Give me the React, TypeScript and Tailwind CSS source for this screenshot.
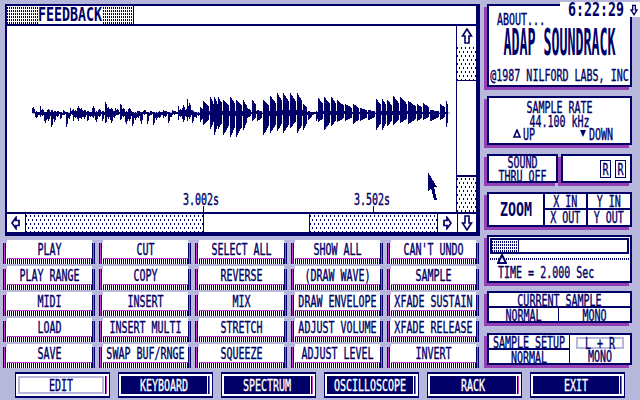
import type { ReactNode } from 'react';

const NAVY = '#000068';

// 1x2 dots, staggered, as in the scrollbar thumbs
const dots = 'bg-[conic-gradient(from_270deg_at_1px_2px,#000068_25%,transparent_0),conic-gradient(from_270deg_at_1px_2px,#000068_25%,transparent_0)] bg-[length:4px_8px] bg-[position:0_1px,2px_5px]';
// rows of fine dots, title bar and time slider
const rows = 'bg-[conic-gradient(from_270deg_at_1px_2px,#000068_25%,transparent_0)] bg-[length:2px_3px] bg-[position:0_1px]';
const stripes = 'bg-[repeating-linear-gradient(90deg,#000068_0_1px,#ffffff_1px_2px)]';

// [x, up, down] peaks, page coordinates, read off the screenshot
const peaks: number[][] = [
  [32, 8, 0], [35, 2, 6], [40, 7, 4], [44, 1, 13], [47, 5, 10], [51, 3, 14], [57, 2, 4], [60, 1, 6], [63, 3, 2], [66, 1, 14],
  [70, 5, 3], [73, 4, 8], [77, 9, 10], [80, 6, 8], [83, 4, 7], [87, 2, 8], [92, 9, 6], [95, 2, 12], [98, 5, 5], [102, 2, 8],
  [105, 11, 10], [110, 6, 12], [115, 5, 3], [120, 9, 7], [125, 2, 15], [128, 6, 10], [132, 1, 13], [137, 3, 6], [140, 1, 14], [143, 4, 2],
  [147, 1, 11], [150, 2, 2], [153, 1, 12], [158, 2, 6], [163, 3, 5], [168, 1, 10], [172, 3, 2], [178, 7, 7], [182, 9, 10], [187, 14, 8],
  [192, 3, 10], [196, 1, 5], [200, 6, 9], [203, 12, 12], [210, 16, 16], [214, 16, 22], [218, 16, 16], [223, 13, 22], [230, 16, 24], [236, 13, 24],
  [243, 13, 17], [247, 5, 5], [252, 13, 8], [257, 3, 8], [263, 13, 22], [270, 17, 20], [277, 20, 18], [283, 20, 20], [290, 20, 15], [297, 20, 20],
  [303, 9, 17], [308, 2, 7], [312, 1, 2], [316, 2, 8], [318, 15, 9], [324, 16, 17], [331, 16, 13], [337, 13, 9], [345, 9, 8], [353, 9, 11],
  [360, 5, 8], [368, 3, 7], [376, 14, 17], [382, 14, 17], [387, 13, 13], [393, 17, 12], [400, 16, 10], [408, 12, 11], [417, 9, 8], [423, 10, 7],
  [430, 3, 8], [440, 9, 7], [446, 12, 14],
];

function waveColumns() {
  const cols: { x: number; up: number; down: number }[] = [];
  for (let i = 0; i < peaks.length; i++) {
    const [x, up, down] = peaks[i];
    const next = i + 1 < peaks.length ? peaks[i + 1][0] : x + 2;
    for (let px = x; px < next; px++) {
      const t = (px - x) / (next - x);
      const loud = px >= 200;
      const fade = 1 - t * (loud ? 0.55 : 0.75);
      // quiet part is a thin trace, loud bursts are solid with a gap between them
      const wobble = loud ? (px === next - 1 && next - x >= 5 ? 0.25 : 1) : px % 3 === 2 ? 0.6 : 1;
      cols.push({ x: px, up: Math.round(up * fade * wobble), down: Math.round(down * fade * wobble) });
    }
  }
  return cols;
}

function T({ children, className = '' }: { children: ReactNode; className?: string }) {
  return (
    <span className={`inline-block translate-y-px scale-y-[1.5] whitespace-pre font-['DejaVu_Sans_Mono',monospace] text-[10px] leading-[8px] text-[#000068] [-webkit-text-stroke:0.25px_currentColor] ${className}`}>
      {children}
    </span>
  );
}

function Big({ children, className = '' }: { children: ReactNode; className?: string }) {
  return (
    <span className={`inline-block whitespace-pre font-['DejaVu_Sans_Mono',monospace] text-[13.3px] font-bold leading-[10px] text-[#000068] ${className}`}>
      {children}
    </span>
  );
}

function ArrowV({ down = false }: { down?: boolean }) {
  return (
    <svg width="12" height="16" viewBox="0 0 12 16" className={down ? 'rotate-180' : ''}>
      <path d="M6 1 L10.5 8 H8 V15 H4 V8 H1.5 Z" fill="none" stroke={NAVY} strokeWidth="1.6" />
    </svg>
  );
}

function ArrowH({ right = false }: { right?: boolean }) {
  return (
    <svg width="9" height="14" viewBox="0 0 9 14" className={right ? 'rotate-180' : ''}>
      <path d="M1 7 L5 1.5 V4.5 H8 V9.5 H5 V12.5 Z" fill="none" stroke={NAVY} strokeWidth="1.7" />
    </svg>
  );
}

function Panel({ children, className = '' }: { children: ReactNode; className?: string }) {
  return (
    <div className={`border-2 border-[#000068] bg-white shadow-[-3px_3px_0_#9440b4] ${className}`}>{children}</div>
  );
}

function Cmd({ label }: { label: string }) {
  return (
    <div className="flex h-[24px] w-[92px]">
      <div className="mt-[3px] flex w-[4px]">
        <div className="w-px bg-[#000068]" />
        <div className="w-px bg-[#c040d0]" />
        <div className="w-px bg-[#000068]" />
        <div className="w-px bg-white" />
      </div>
      <div className="flex flex-1 flex-col">
        <div className="flex h-[18px] items-center justify-center bg-white">
          <T>{label}</T>
        </div>
        <div className="h-px bg-[#c040d0]" />
        <div className={`h-[5px] ${stripes}`} />
      </div>
      <div className="mt-[3px] flex w-[3px]">
        <div className="w-px bg-[#000068]" />
        <div className="w-px bg-[#c040d0]" />
        <div className="w-px bg-[#000068]" />
      </div>
    </div>
  );
}

function NavBtn({ label, active = false }: { label: string; active?: boolean }) {
  return (
    <div className="flex h-[26px] w-[95px] border-y-2 border-x border-[#000068] bg-white p-[2px]">
      <div className={`flex flex-1 items-center justify-center border-2 ${active ? 'border-[#b8b8dc] bg-white' : 'border-[#000068] bg-[#000068]'}`}>
        <T className={active ? '' : 'text-white'}>{label}</T>
      </div>
      <div className="ml-px w-px bg-[#000068]" />
      <div className="w-px bg-[#c040d0]" />
    </div>
  );
}

const commands = [
  ['PLAY', 'CUT', 'SELECT ALL', 'SHOW ALL', "CAN'T UNDO"],
  ['PLAY RANGE', 'COPY', 'REVERSE', '(DRAW WAVE)', 'SAMPLE'],
  ['MIDI', 'INSERT', 'MIX', 'DRAW ENVELOPE', 'XFADE SUSTAIN'],
  ['LOAD', 'INSERT MULTI', 'STRETCH', 'ADJUST VOLUME', 'XFADE RELEASE'],
  ['SAVE', 'SWAP BUF/RNGE', 'SQUEEZE', 'ADJUST LEVEL', 'INVERT'],
];

const navItems = ['EDIT', 'KEYBOARD', 'SPECTRUM', 'OSCILLOSCOPE', 'RACK', 'EXIT'];

export default function App() {
  const cols = waveColumns();

  return (
    <div className="relative flex h-[400px] w-[640px] overflow-hidden bg-[#b8b8dc] text-[0px] leading-[0px]">
      {/* clock sits on top of the about panel */}
      <div className="absolute right-0 top-[2px] z-10 flex h-[15px] w-[80px] items-center bg-white pl-[8px]">
        <Big className="scale-y-[1.4]">6:22:29</Big>
        <svg width="8" height="12" viewBox="0 0 12 16" className="ml-[6px] rotate-180">
          <path d="M6 1 L10.5 8 H8 V15 H4 V8 H1.5 Z" fill="none" stroke={NAVY} strokeWidth="2" />
        </svg>
      </div>

      {/* left side */}
      <div className="flex w-[484px] flex-col">
        <div className="ml-[5px] mt-[4px] flex h-[232px] w-[475px] flex-col border-b-4 border-l-2 border-r-4 border-t-2 border-[#000068] bg-white">
          <div className="flex h-[20px] shrink-0 border-b-2 border-[#000068]">
            <div className={`flex h-full w-[127px] justify-center border-r border-[#000068] ${rows}`}>
              <div className="flex items-center bg-white">
                <Big className="scale-y-[1.5]">FEEDBACK</Big>
              </div>
            </div>
          </div>

          <div className="flex h-[186px] shrink-0">
            <div className="relative flex-1">
              <svg width="449" height="186" viewBox="7 26 449 186" className="absolute left-0 top-0" shapeRendering="crispEdges">
                <rect x="32" y="112" width="418" height="2" fill="#b8b8dc" />
                {cols.map((c) => (
                  <rect key={c.x} x={c.x} y={113 - c.up} width="1" height={Math.max(c.up + c.down, 1)} fill={NAVY} />
                ))}
                <rect x="203" y="206" width="1" height="6" fill={NAVY} />
                <rect x="373" y="206" width="1" height="6" fill={NAVY} />
                <polygon points="428,172 437,187 434,187 437,200 434,200 431,188 428,191" fill={NAVY} />
              </svg>
              <T className="absolute left-[176px] top-[169px]">3.002s</T>
              <T className="absolute left-[347px] top-[169px]">3.502s</T>
            </div>
            <div className="flex w-[20px] flex-col border-l border-[#000068]">
              <div className="flex h-[20px] items-center justify-center">
                <ArrowV />
              </div>
              <div className={`h-[35px] border-b border-[#000068] ${dots}`} />
              <div className="flex-1" />
              <div className={`h-[37px] border-t-2 border-[#000068] ${dots}`} />
            </div>
          </div>

          <div className="flex h-[20px] shrink-0 border-t-2 border-[#000068]">
            <div className="flex w-[19px] items-center justify-center border-r border-[#000068] pr-[2px]">
              <ArrowH />
            </div>
            <div className={`w-[178px] border-r border-[#000068] ${dots}`} />
            <div className="w-[105px]" />
            <div className={`w-[128px] border-l border-[#000068] ${dots}`} />
            <div className="flex w-[20px] items-center justify-center border-l border-[#000068]">
              <ArrowH right />
            </div>
            <div className="flex flex-1 items-center justify-center border-l border-[#000068]">
              <ArrowV down />
            </div>
          </div>
        </div>

        <div className="ml-[3px] mt-[4px] flex flex-col gap-[2px]">
          {commands.map((row, i) => (
            <div key={i} className="flex gap-[4px]">
              {row.map((label) => (
                <Cmd key={label} label={label} />
              ))}
            </div>
          ))}
        </div>

        <div className="ml-[15px] mt-[4px] flex w-[620px] gap-[8px]">
          {navItems.map((item) => (
            <NavBtn key={item} label={item} active={item === 'EDIT'} />
          ))}
        </div>
      </div>

      {/* right side */}
      <div className="ml-[3px] mt-[4px] flex w-[145px] flex-col">
        <Panel className="flex h-[83px] flex-col">
          <div className="ml-[8px] mt-[9px]"><T>ABOUT...</T></div>
          <div className="mt-[16px] text-center"><Big className="scale-y-[2.8]">ADAP SOUNDRACK</Big></div>
          <div className="mt-[22px] text-center"><T>@1987 NILFORD LABS, INC</T></div>
        </Panel>

        <Panel className="mt-[9px] flex h-[49px] flex-col items-center">
          <div className="mt-[5px]"><T>SAMPLE RATE</T></div>
          <div className="mt-[6px]"><T>44.100 kHz</T></div>
          <div className="mt-[4px] flex w-full pl-[24px]">
            <div className="flex w-[66px] items-center gap-[2px]">
              <svg width="8" height="9" viewBox="0 0 8 9"><path d="M4 1 L7 8 H1 Z" fill="none" stroke={NAVY} strokeWidth="1.6" /></svg>
              <T>UP</T>
            </div>
            <div className="flex items-center gap-[2px]">
              <svg width="8" height="9" viewBox="0 0 8 9"><path d="M1 1 H7 L4 8 Z" fill={NAVY} /></svg>
              <T>DOWN</T>
            </div>
          </div>
        </Panel>

        <div className="mt-[9px] flex gap-[3px]">
          <Panel className="flex h-[29px] w-[71px] flex-col items-center justify-center gap-[6px]">
            <T>SOUND</T>
            <T>THRU OFF</T>
          </Panel>
          <Panel className="flex h-[29px] w-[71px] items-center justify-end gap-[4px] pr-[4px]">
            <div className="flex h-[18px] w-[11px] items-center justify-center border border-[#000068]"><T>R</T></div>
            <div className="flex h-[18px] w-[11px] items-center justify-center border border-[#000068]"><T>R</T></div>
          </Panel>
        </div>

        <Panel className="mt-[9px] flex h-[35px]">
          <div className="flex w-[56px] items-center justify-center border-r-2 border-[#000068]">
            <Big className="scale-y-[1.5]">ZOOM</Big>
          </div>
          <div className="grid flex-1 grid-cols-2 grid-rows-2">
            <div className="flex items-center justify-center border-b-2 border-r-2 border-[#000068]"><T>X IN</T></div>
            <div className="flex items-center justify-center border-b-2 border-[#000068]"><T>Y IN</T></div>
            <div className="flex items-center justify-center border-r-2 border-[#000068]"><T>X OUT</T></div>
            <div className="flex items-center justify-center"><T>Y OUT</T></div>
          </div>
        </Panel>

        <Panel className="mt-[8px] flex h-[48px] flex-col px-[1px] pt-[1px]">
          <div className="flex h-[16px] border-2 border-[#000068]">
            <div className={`w-[27px] border-r border-[#000068] ${rows}`} />
          </div>
          <div className="relative mt-[4px] h-[2px] bg-[repeating-linear-gradient(90deg,#000068_0_1px,#ffffff_1px_2px)]">
            <svg width="10" height="10" viewBox="0 0 10 10" className="absolute left-[7px] top-[-4px]">
              <path d="M5 1 L9 9 H1 Z" fill="white" stroke={NAVY} strokeWidth="2" />
            </svg>
          </div>
          <div className="ml-[8px] mt-[8px]"><T>TIME = 2.000 Sec</T></div>
        </Panel>

        <Panel className="mt-[8px] flex h-[32px] flex-col">
          <div className="flex h-[15px] items-center justify-center border-b-2 border-[#000068]"><T>CURRENT SAMPLE</T></div>
          <div className="flex flex-1">
            <div className="flex w-[70px] items-center justify-center border-r border-[#000068]"><T>NORMAL</T></div>
            <div className="flex flex-1 items-center justify-center"><T>MONO</T></div>
          </div>
        </Panel>

        <Panel className="mt-[10px] flex h-[32px]">
          <div className="flex w-[81px] flex-col border-r border-[#000068]">
            <div className="flex h-[15px] items-center justify-center border-b-2 border-[#000068]"><T>SAMPLE SETUP</T></div>
            <div className="flex flex-1 items-center justify-center"><T>NORMAL</T></div>
          </div>
          <div className="flex flex-1 flex-col items-center">
            <div className="mt-[2px] flex h-[12px] w-[48px] items-center justify-center border-2 border-[#b8b8dc]"><T className="scale-y-[1.2]">L + R</T></div>
            <div className="flex flex-1 items-center justify-center"><T>MONO</T></div>
          </div>
        </Panel>
      </div>
    </div>
  );
}
